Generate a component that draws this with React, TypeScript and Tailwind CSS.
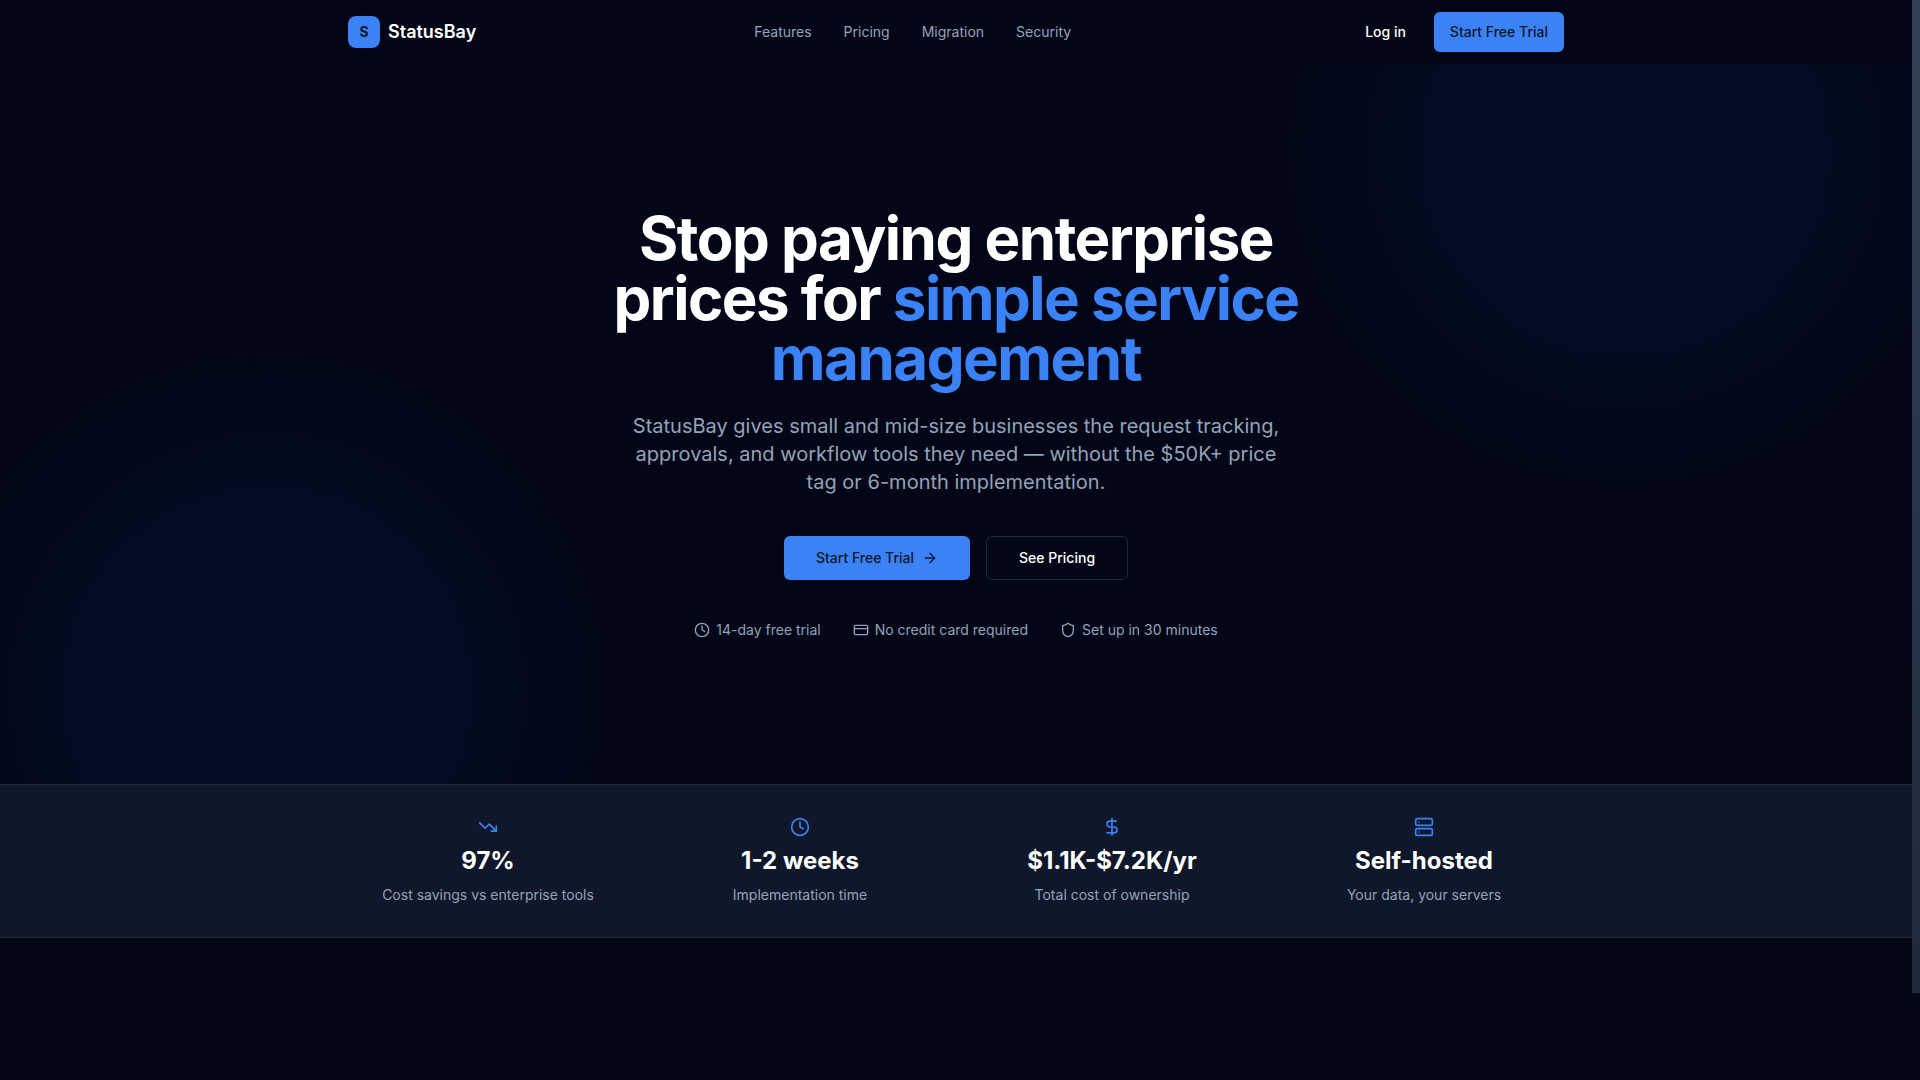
import { ArrowRight, Clock, CreditCard, DollarSign, Server, Shield, TrendingDown } from "lucide-react";

const navLinks = ["Features", "Pricing", "Migration", "Security"];

const perks = [
  { icon: Clock, label: "14-day free trial" },
  { icon: CreditCard, label: "No credit card required" },
  { icon: Shield, label: "Set up in 30 minutes" },
];

const stats = [
  { icon: TrendingDown, value: "97%", label: "Cost savings vs enterprise tools" },
  { icon: Clock, value: "1-2 weeks", label: "Implementation time" },
  { icon: DollarSign, value: "$1.1K-$7.2K/yr", label: "Total cost of ownership" },
  { icon: Server, value: "Self-hosted", label: "Your data, your servers" },
];

const App = () => {
  return (
    <div className="flex h-screen overflow-hidden bg-[#020617] font-['Inter',sans-serif] text-white">
      <main className="min-w-0 flex-1">
        <header className="h-16">
          <div className="mx-auto flex h-full max-w-7xl items-center justify-between px-8">
            <div className="flex items-center gap-2">
              <div className="flex h-8 w-8 items-center justify-center rounded-lg bg-[#3b82f6] text-sm font-bold text-[#0f172a]">
                S
              </div>
              <span className="text-lg font-semibold">StatusBay</span>
            </div>
            <nav className="flex items-center gap-8">
              {navLinks.map((link) => (
                <a key={link} href="#" className="text-sm text-[#94a3b8]">
                  {link}
                </a>
              ))}
            </nav>
            <div className="flex items-center gap-3">
              <button type="button" className="h-10 px-4 text-sm font-medium">
                Log in
              </button>
              <button type="button" className="h-10 rounded-md bg-[#3b82f6] px-4 text-sm font-medium text-[#0f172a]">
                Start Free Trial
              </button>
            </div>
          </div>
        </header>

        <section className="bg-[radial-gradient(circle_at_14%_87%,rgba(5,95,170,0.08),rgba(5,95,170,0.07)_170px,transparent_340px),radial-gradient(circle_at_85%_12%,rgba(5,95,170,0.08),rgba(5,95,170,0.07)_170px,transparent_340px)] py-36">
          <div className="mx-auto flex max-w-3xl flex-col items-center text-center">
            <h1 className="text-6xl font-bold tracking-tight">
              Stop paying enterprise prices for <span className="text-[#3b82f6]">simple service management</span>
            </h1>
            <p className="mt-6 max-w-2xl text-xl text-[#94a3b8]">
              StatusBay gives small and mid-size businesses the request tracking, approvals, and workflow tools they need — without the $50K+ price tag or 6-month implementation.
            </p>
            <div className="mt-10 flex items-center gap-4">
              <button type="button" className="flex h-11 items-center gap-2 rounded-md bg-[#3b82f6] px-8 text-sm font-medium text-[#0f172a]">
                Start Free Trial
                <ArrowRight className="h-4 w-4" />
              </button>
              <button type="button" className="h-11 rounded-md border border-[#1e293b] bg-[#020617] px-8 text-sm font-medium">
                See Pricing
              </button>
            </div>
            <div className="mt-10 flex items-center gap-8 text-sm text-[#94a3b8]">
              {perks.map(({ icon: Icon, label }) => (
                <div key={label} className="flex items-center gap-1.5">
                  <Icon className="h-4 w-4" />
                  <span>{label}</span>
                </div>
              ))}
            </div>
          </div>
        </section>

        <section className="border-y border-[#1e293b] bg-[#0f172a] py-8">
          <div className="mx-auto grid max-w-7xl grid-cols-4 gap-8 px-8">
            {stats.map(({ icon: Icon, value, label }) => (
              <div key={value} className="flex flex-col items-center text-center">
                <Icon className="mb-2 h-5 w-5 text-[#3b82f6]" />
                <div className="text-2xl font-bold">{value}</div>
                <div className="mt-2 text-sm text-[#94a3b8]">{label}</div>
              </div>
            ))}
          </div>
        </section>
      </main>

      <aside className="w-2 shrink-0">
        <div className="h-[993px] bg-gradient-to-b from-[#334155] to-[#1e293b]"></div>
      </aside>
    </div>
  );
};

export default App;
